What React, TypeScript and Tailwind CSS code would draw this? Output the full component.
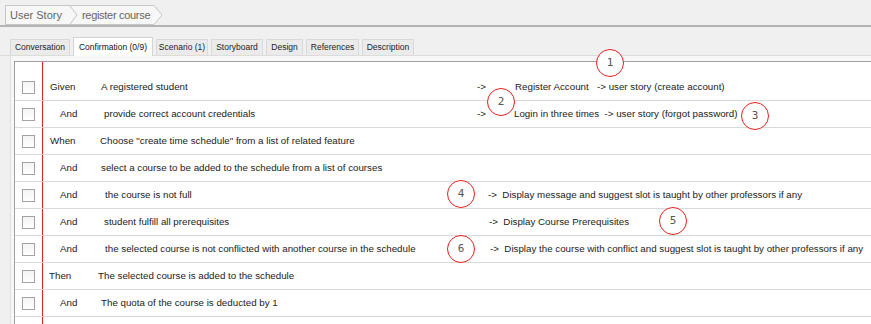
import React from "react";

type Row = {
  key: string;
  keyPad: string;
  text: string;
  textPad: string;
  first?: boolean;
  right?: React.ReactNode;
};

const rows: Row[] = [
  {
    key: "Given",
    keyPad: "pl-[7px]",
    text: "A registered student",
    textPad: "pl-[3px]",
    first: true,
    right: (
      <div className="flex">
        <span className="w-[38px]">-&gt;</span>
        <span className="w-[82px]">Register Account</span>
        <span>-&gt; user story (create account)</span>
      </div>
    ),
  },
  {
    key: "And",
    keyPad: "pl-[17px]",
    text: "provide correct account credentials",
    textPad: "pl-[6px]",
    right: (
      <div className="flex">
        <span className="w-[37px]">-&gt;</span>
        <span className="whitespace-pre">Login in three times  -&gt; user story (forgot password)</span>
      </div>
    ),
  },
  {
    key: "When",
    keyPad: "pl-[7px]",
    text: 'Choose "create time schedule" from a list of related feature',
    textPad: "pl-[2px]",
  },
  {
    key: "And",
    keyPad: "pl-[17px]",
    text: "select a course to be added to the schedule from a list of courses",
    textPad: "pl-[3px]",
  },
  {
    key: "And",
    keyPad: "pl-[17px]",
    text: "the course is not full",
    textPad: "pl-[7px]",
    right: (
      <div className="pl-[11px] whitespace-pre">
        -&gt;  Display message and suggest slot is taught by other professors if any
      </div>
    ),
  },
  {
    key: "And",
    keyPad: "pl-[17px]",
    text: "student fulfill all prerequisites",
    textPad: "pl-[6px]",
    right: <div className="pl-[12px] whitespace-pre">-&gt;  Display Course Prerequisites</div>,
  },
  {
    key: "And",
    keyPad: "pl-[17px]",
    text: "the selected course is not conflicted with another course in the schedule",
    textPad: "pl-[7px]",
    right: (
      <div className="pl-[13px] whitespace-pre">
        -&gt;  Display the course with conflict and suggest slot is taught by other professors if any
      </div>
    ),
  },
  {
    key: "Then",
    keyPad: "pl-[6px]",
    text: "The selected course is added to the schedule",
    textPad: "pl-0",
  },
  {
    key: "And",
    keyPad: "pl-[17px]",
    text: "The quota of the course is deducted by 1",
    textPad: "pl-[3px]",
  },
];

const tabs = [
  { t: "Conversation", w: "w-[60px]" },
  { t: "Confirmation (0/9)", w: "w-[80px]" },
  { t: "Scenario (1)", w: "w-[52px]" },
  { t: "Storyboard", w: "w-[52px]" },
  { t: "Design", w: "w-[37px]" },
  { t: "References", w: "w-[53px]" },
  { t: "Description", w: "w-[52px]" },
];

const marks = [
  { n: "1", cls: "left-[596px] top-[49px]" },
  { n: "2", cls: "left-[487px] top-[88px]" },
  { n: "3", cls: "left-[741px] top-[102px]" },
  { n: "4", cls: "left-[447px] top-[180px]" },
  { n: "5", cls: "left-[659px] top-[207px]" },
  { n: "6", cls: "left-[447px] top-[235px]" },
];

function Checkbox() {
  return (
    <div className="w-[13px] h-[13px] border border-[#a3a3a3] bg-gradient-to-b from-[#f4f4f4] to-white" />
  );
}

function Breadcrumb() {
  return (
    <div className="h-[27px] bg-[#f0f0f0] border-b-2 border-[#b4b4b4] pt-[5px] pl-[5px]">
      <div className="flex h-[20px] text-[11px] text-[#666]">
        <div className="flex items-center border-y border-l border-[#c8c8c8] bg-[#f7f7f7] pl-[4px] pr-[7px]">
          User Story
        </div>
        <div className="flex items-center border-y border-[#c8c8c8] bg-[#f7f7f7]">
          <svg width="9" height="18" viewBox="0 0 9 18">
            <polyline points="1,0 8,9 1,18" fill="none" stroke="#c4c4c4" strokeWidth="1" />
          </svg>
          <span className="pl-[4px] pr-[4px] tracking-[-0.3px]">register course</span>
        </div>
        <svg width="9" height="20" viewBox="0 0 9 20" className="shrink-0">
          <polygon points="0,0.5 8,10 0,19.5" fill="#f7f7f7" />
          <polyline points="0,0.5 8,10 0,19.5" fill="none" stroke="#c8c8c8" strokeWidth="1" />
        </svg>
      </div>
    </div>
  );
}

function Tabs() {
  return (
    <div className="h-[29px] bg-[#f0f0f0] flex items-end pl-[10px] gap-[3px] border-b border-[#dcdcdc]">
      {tabs.map((tab, i) =>
        i === 1 ? (
          <div
            key={tab.t}
            className={`${tab.w} h-[19px] -mb-px flex items-center justify-center whitespace-nowrap bg-white border-x border-t border-[#d4d4d4] text-[8.5px] text-[#111]`}
          >
            {tab.t}
          </div>
        ) : (
          <div
            key={tab.t}
            className={`${tab.w} h-[16px] flex items-center justify-center whitespace-nowrap bg-[#ebebeb] border-x border-t border-[#d9d9d9] text-[8.5px] text-[#222]`}
          >
            {tab.t}
          </div>
        )
      )}
    </div>
  );
}

export default function App() {
  return (
    <div
      className="relative w-[871px] h-[324px] overflow-hidden bg-[#f0f0f0]"
      style={{ fontFamily: '"Liberation Sans", Arial, sans-serif' }}
    >
      <Breadcrumb />
      <Tabs />
      <div className="ml-[10px] border-l border-[#e0e0e0] bg-[#f7f7f7] pt-[5px] pl-[3px]">
        <div className="bg-white border-t border-l border-[#a0a0a0] text-[9.75px] text-[#222]">
          {rows.map((r, i) => {
            const pad = r.first ? "pt-[12px]" : "";
            return (
              <div
                key={i}
                className={`flex border-b border-[#d9d9d9] ${r.first ? "h-[39px]" : "h-[27px]"}`}
              >
                <div
                  className={`w-[28px] shrink-0 flex items-center justify-center border-r border-[#e02020] ${pad}`}
                >
                  <Checkbox />
                </div>
                <div className={`w-[55px] shrink-0 flex items-center ${r.keyPad} ${pad}`}>{r.key}</div>
                <div
                  className={`w-[379px] shrink-0 flex items-center whitespace-nowrap ${r.textPad} ${pad}`}
                >
                  {r.text}
                </div>
                <div className={`flex items-center whitespace-nowrap ${pad}`}>{r.right}</div>
              </div>
            );
          })}
          <div className="flex h-[20px]">
            <div className="w-[28px] border-r border-[#e02020]" />
          </div>
        </div>
      </div>
      {marks.map((m) => (
        <div
          key={m.n}
          className={`absolute ${m.cls} w-[28px] h-[28px] rounded-full border border-[#e8201c] bg-white flex items-center justify-center text-[11px] text-[#555]`}
          style={{ fontFamily: '"DejaVu Sans Mono", monospace' }}
        >
          {m.n}
        </div>
      ))}
    </div>
  );
}
